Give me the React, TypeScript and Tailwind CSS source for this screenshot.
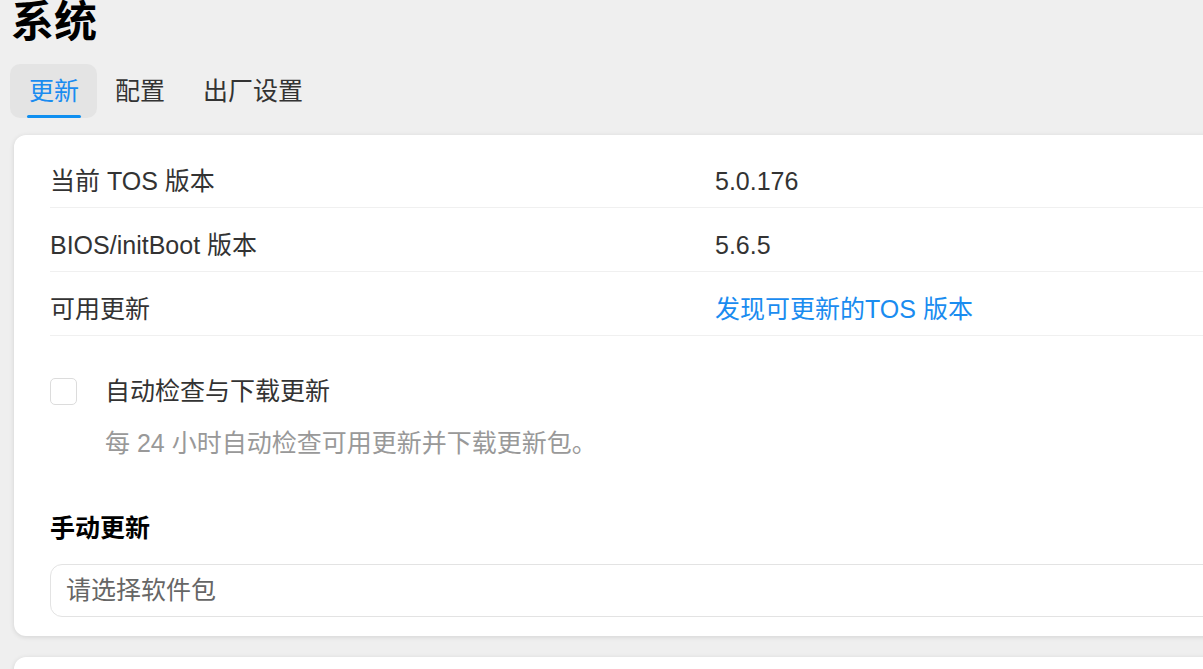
import React from "react";

const font = { fontFamily: '"Liberation Sans", "Noto Sans CJK SC", sans-serif' };

function Row({ label, value, blue }: { label: string; value: string; blue?: boolean }) {
  return (
    <div className="flex border-b border-[#f0f0f0] pt-[19px] pb-[8px] text-[25px] leading-[36px]">
      <div className="w-[665px] text-[#333]">{label}</div>
      <div className={blue ? "text-[#1a8cf0]" : "text-[#333]"}>{value}</div>
    </div>
  );
}

export default function App() {
  return (
    <div className="w-[1203px] h-[669px] overflow-hidden bg-[#efefef]" style={font}>
      <div className="w-[1300px]">
        <h1 className="pl-[11px] pt-[1px] text-[43px] leading-[42px] font-bold text-black">系统</h1>
        <div className="mt-[21px] flex pl-[10px] text-[25px] leading-[36px]">
          <div className="relative flex h-[54px] items-center rounded-[10px] bg-[#e4e4e4] pl-[19px] pr-[18px] text-[#1a8cf0]">
            更新
            <div className="absolute bottom-0 left-[17px] right-[16px] h-[3px] rounded-full bg-[#0f8ff0]" />
          </div>
          <div className="flex h-[54px] items-center pl-[18px] pr-[19px] text-[#333]">配置</div>
          <div className="flex h-[54px] items-center px-[19px] text-[#333]">出厂设置</div>
        </div>
        <div className="ml-[14px] mt-[17px] rounded-[12px] bg-white pl-[36px] pt-[9px] pb-[19px] shadow-[0_1px_5px_rgba(0,0,0,0.12)]">
          <Row label="当前 TOS 版本" value="5.0.176" />
          <Row label="BIOS/initBoot 版本" value="5.6.5" />
          <Row label="可用更新" value="发现可更新的TOS 版本" blue />
          <div className="mt-[37px] flex items-center text-[25px] leading-[36px] text-[#333]">
            <div className="h-[27px] w-[27px] rounded-[5px] border border-[#dcdcdc] bg-white" />
            <div className="ml-[28px]">自动检查与下载更新</div>
          </div>
          <div className="mt-[16px] ml-[55px] text-[25px] leading-[36px] text-[#999]">
            每 24 小时自动检查可用更新并下载更新包。
          </div>
          <div className="mt-[49px] text-[25px] font-bold leading-[36px] text-black">手动更新</div>
          <div className="mt-[18px] flex h-[53px] items-center rounded-[12px] border border-[#e3e3e3] pl-[15px] text-[25px] text-[#666]">
            请选择软件包
          </div>
        </div>
        <div className="ml-[14px] mt-[21px] h-[120px] rounded-[12px] bg-white shadow-[0_1px_5px_rgba(0,0,0,0.12)]" />
      </div>
    </div>
  );
}
